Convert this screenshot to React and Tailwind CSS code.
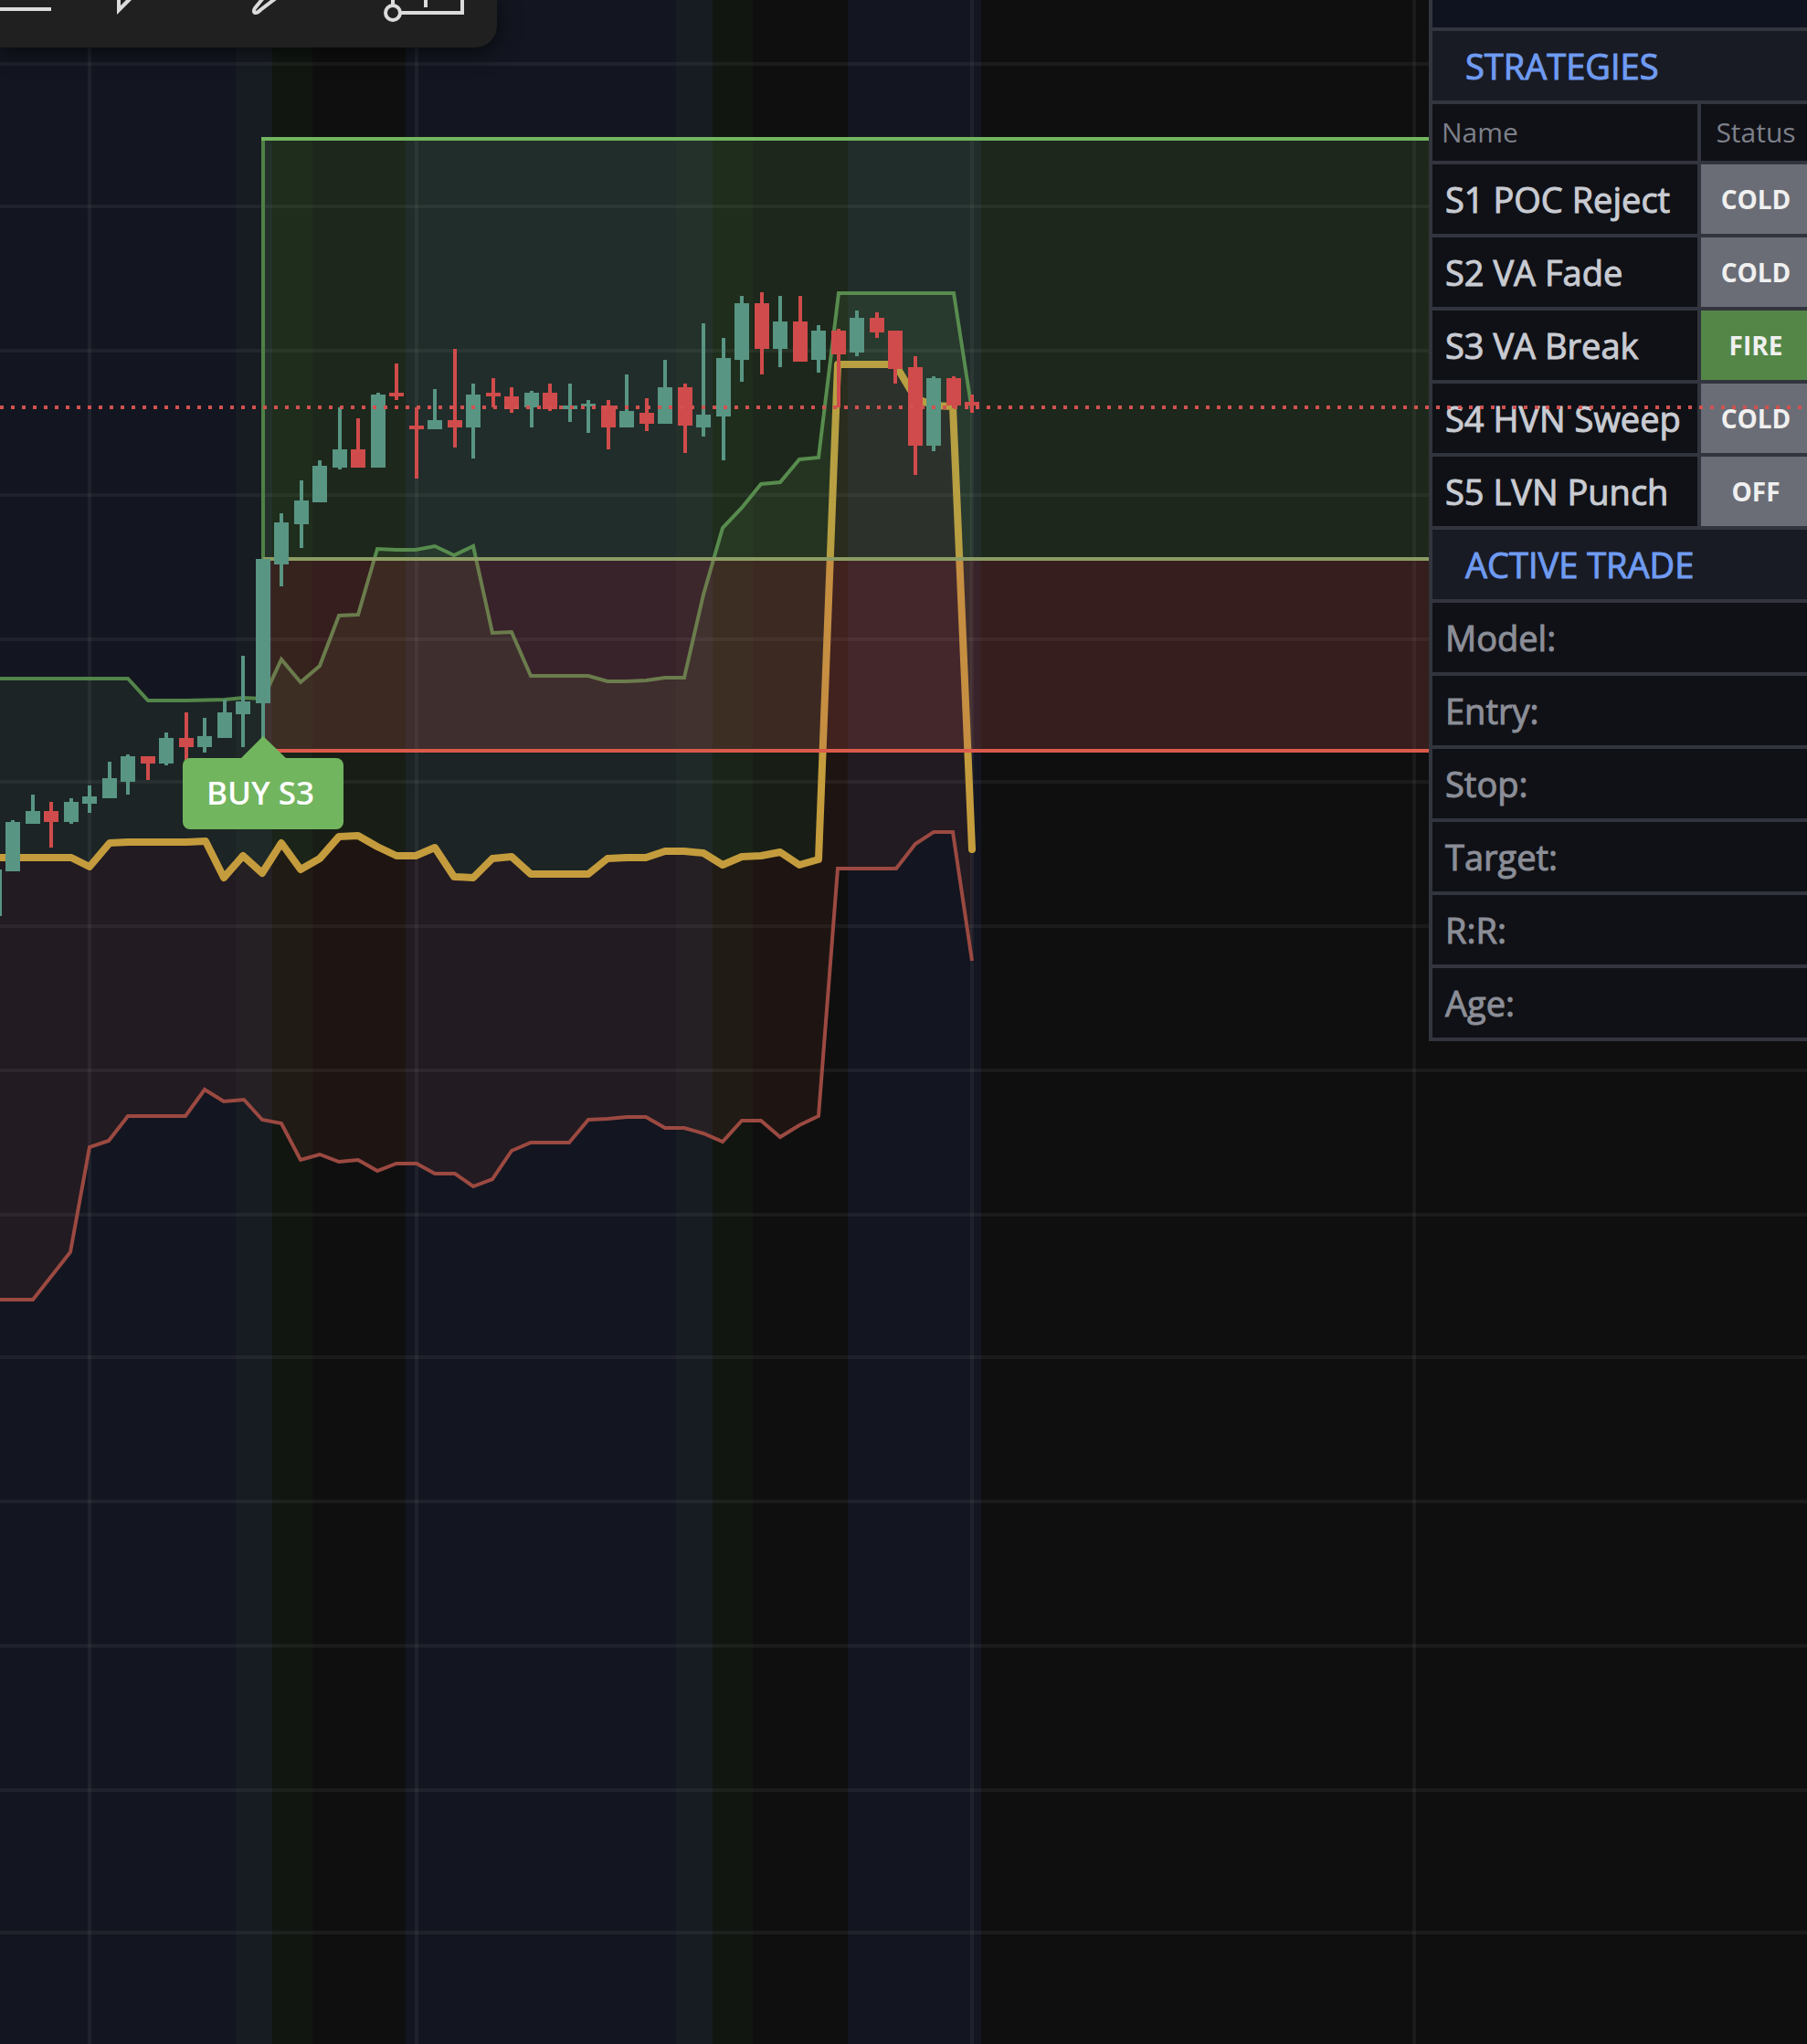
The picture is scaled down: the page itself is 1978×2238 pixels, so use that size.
const UP = "#589583";
const DOWN = "#d04b4b";

// [center x, high, body top, body bottom, low, direction]
const candles = [
  [-6, 952, 952, 1003, 1003, 1],
  [14, 898, 900, 954, 954, 1],
  [36, 870, 888, 902, 902, 1],
  [56, 878, 888, 900, 928, 0],
  [78, 874, 878, 900, 902, 1],
  [98, 860, 872, 880, 890, 1],
  [120, 834, 852, 874, 874, 1],
  [140, 826, 828, 856, 870, 1],
  [162, 828, 828, 836, 854, 0],
  [182, 802, 808, 836, 838, 1],
  [204, 780, 808, 818, 832, 0],
  [224, 786, 806, 818, 824, 1],
  [246, 766, 780, 808, 808, 1],
  [266, 718, 768, 782, 818, 1],
  [288, 612, 612, 770, 812, 1],
  [308, 562, 572, 618, 642, 1],
  [330, 526, 548, 574, 600, 1],
  [350, 504, 510, 550, 550, 1],
  [372, 446, 492, 512, 514, 1],
  [392, 458, 492, 512, 512, 0],
  [414, 430, 432, 512, 512, 1],
  [434, 398, 430, 434, 438, 0],
  [456, 446, 466, 470, 524, 0],
  [476, 426, 460, 470, 470, 1],
  [498, 382, 460, 468, 490, 0],
  [518, 420, 432, 468, 502, 1],
  [540, 414, 430, 434, 446, 0],
  [560, 424, 434, 448, 452, 0],
  [582, 428, 430, 446, 468, 1],
  [602, 420, 430, 448, 450, 0],
  [624, 420, 444, 448, 462, 1],
  [644, 438, 442, 445, 474, 1],
  [666, 438, 444, 468, 492, 0],
  [686, 410, 450, 468, 468, 1],
  [708, 436, 452, 464, 472, 0],
  [728, 394, 424, 464, 464, 1],
  [750, 420, 424, 466, 496, 0],
  [770, 354, 454, 468, 478, 1],
  [792, 370, 392, 456, 504, 1],
  [812, 324, 332, 394, 418, 1],
  [834, 320, 332, 382, 410, 0],
  [854, 324, 352, 382, 402, 1],
  [876, 324, 352, 396, 396, 0],
  [896, 356, 362, 394, 408, 1],
  [918, 360, 362, 388, 446, 0],
  [938, 340, 348, 386, 390, 1],
  [960, 342, 348, 364, 370, 0],
  [980, 362, 362, 404, 420, 0],
  [1002, 390, 402, 488, 520, 0],
  [1022, 412, 414, 488, 494, 1],
  [1044, 412, 414, 444, 447, 0],
  [1064, 432, 440, 444, 452, 0],
];

const upper = [
  [-4, 743], [140, 743], [162, 767], [204, 767], [246, 766], [266, 764], [288, 765],
  [308, 722], [329, 747], [350, 729], [371, 674], [392, 673], [413, 601], [434, 602],
  [455, 602], [476, 598], [497, 608], [518, 598], [539, 693], [560, 692], [581, 740],
  [644, 740], [665, 746], [686, 746], [707, 745], [728, 742], [749, 742], [770, 651],
  [791, 578], [812, 556], [833, 530], [854, 528], [875, 503], [896, 501], [918, 321],
  [1044, 321], [1064, 450],
];

const middle = [
  [-4, 939], [78, 939], [98, 949], [120, 923], [140, 922], [204, 922], [225, 921],
  [245, 961], [266, 937], [287, 956], [308, 923], [329, 952], [350, 940], [371, 916],
  [392, 915], [413, 927], [434, 937], [455, 937], [476, 928], [497, 960], [518, 961],
  [539, 940], [560, 938], [581, 957], [644, 957], [665, 940], [686, 939], [707, 939],
  [728, 932], [749, 932], [770, 934], [791, 947], [812, 938], [833, 937], [854, 933],
  [875, 947], [896, 941], [917, 399], [980, 399], [1002, 436], [1022, 444], [1043, 445],
  [1064, 930],
];

const lower = [
  [-4, 1423], [36, 1423], [77, 1371], [98, 1256], [119, 1249], [140, 1222], [203, 1222],
  [224, 1193], [245, 1206], [267, 1204], [287, 1226], [308, 1230], [329, 1270], [350, 1264],
  [371, 1272], [392, 1270], [413, 1282], [434, 1274], [456, 1274], [476, 1285], [498, 1285],
  [518, 1299], [539, 1291], [560, 1260], [581, 1251], [623, 1251], [644, 1226], [665, 1225],
  [686, 1223], [707, 1223], [728, 1235], [749, 1235], [770, 1241], [791, 1250], [812, 1227],
  [833, 1227], [854, 1245], [875, 1232], [896, 1222], [917, 951], [981, 951], [1002, 924],
  [1022, 911], [1043, 911], [1064, 1052],
];

const join = (pts) => pts.map((p) => p.join(",")).join(" ");
const between = (a, b) => join([...a, ...[...b].reverse()]);

const gridY = [70, 226, 384, 542, 700, 856, 1014, 1172, 1330, 1486, 1644, 1802, 1960, 2116];
const gridX = [98, 456, 1064, 1548];

// Session bands: [start x, end x, colour]
const bands = [
  [0, 258, "#131620"],
  [258, 298, "#171b22"],
  [298, 342, "#111611"],
  [444, 740, "#131620"],
  [740, 780, "#171b22"],
  [780, 824, "#111611"],
  [928, 1074, "#131620"],
];

function Chart() {
  return (
    <svg
      viewBox="0 0 1978 2238"
      className="col-start-1 row-start-1 block h-auto w-full"
      role="img"
      aria-label="Price chart"
    >
      <rect width="1978" height="2238" fill="#0f0f0f" />
      {bands.map(([a, b, fill]) => (
        <rect key={a} x={a} width={b - a} height="2238" fill={fill} />
      ))}

      <polygon points={between(upper, middle)} fill="rgba(109,162,92,0.1)" />
      <polygon points={between(middle, lower)} fill="rgba(169,82,52,0.1)" />

      {gridY.map((y) => (
        <rect key={y} y={y - 2} width="1978" height="4" fill="rgba(255,255,255,0.05)" />
      ))}
      {gridX.map((x) => (
        <rect key={x} x={x - 2} width="4" height="2238" fill="rgba(255,255,255,0.05)" />
      ))}

      <polyline points={join(upper)} fill="none" stroke="#53854a" strokeWidth="4" />
      <polyline points={join(lower)} fill="none" stroke="#9b4941" strokeWidth="4" />
      <polyline
        points={join(middle)}
        fill="none"
        stroke="#c49c3d"
        strokeWidth="8"
        strokeLinejoin="round"
        strokeLinecap="round"
      />

      <rect x="288" y="152" width="1690" height="460" fill="rgba(114,181,98,0.15)" />
      <rect x="288" y="612" width="1690" height="210" fill="rgba(205,90,85,0.2)" />
      <path d="M288 152V612" stroke="#4f8044" strokeWidth="4" />
      <path d="M286 152H1978" stroke="#72b55f" strokeWidth="4" />
      <path d="M288 612H1978" stroke="#8c9c63" strokeWidth="4" />
      <path d="M288 822H1978" stroke="#db5b4b" strokeWidth="4" />

      {candles.map(([x, high, top, bottom, low, up]) => (
        <g key={x} fill={up ? UP : DOWN}>
          <rect x={x - 2} y={high} width="4" height={low - high} />
          <rect x={x - 8} y={top} width="16" height={bottom - top} />
        </g>
      ))}

      <path d="M262 832L288 806L315 832Z" fill="#72b55f" />
      <rect x="200" y="830" width="176" height="78" rx="8" fill="#72b55f" />
      <text
        x="285"
        y="881"
        textAnchor="middle"
        fill="#fff"
        className="font-['Open_Sans',sans-serif] text-[35px] font-semibold"
      >
        BUY S3
      </text>
    </svg>
  );
}

function PriceLine() {
  return (
    <svg
      viewBox="0 0 1978 2238"
      className="pointer-events-none z-10 col-start-1 row-start-1 block h-auto w-full"
      aria-hidden="true"
    >
      <path d="M0 446H1978" stroke="#d15250" strokeWidth="4" strokeDasharray="4 8" />
    </svg>
  );
}

function ToolButton({ label, className, children }) {
  return (
    <button type="button" aria-label={label} className={className}>
      <svg
        viewBox="0 0 148 52"
        className="block h-[52px] w-[148px]"
        fill="none"
        stroke="#dbdbdb"
        strokeWidth="4"
        aria-hidden="true"
      >
        {children}
      </svg>
    </button>
  );
}

function Toolbar() {
  return (
    <div
      role="toolbar"
      aria-label="Drawing tools"
      className="z-20 col-start-1 row-start-1 flex items-start self-start justify-self-start overflow-hidden rounded-br-3xl bg-[#202020] shadow-[0_4px_24px_rgba(0,0,0,0.6)]"
    >
      <ToolButton label="Horizontal line" className="w-[100px] overflow-hidden">
        <path d="M0 10H56" />
      </ToolButton>
      <ToolButton label="Cursor">
        <path d="M28 0V16L44 0H38L32 6V0Z" fill="#dbdbdb" stroke="none" />
      </ToolButton>
      <ToolButton label="Pencil">
        <path d="M40 -2L31 9C29 12 30 14 32 14C34 14 35 13 37 11L54 -2" />
      </ToolButton>
      <ToolButton label="Range">
        <path d="M34 0V6M42 14H110V0M70 0V8" />
        <circle cx="34" cy="14" r="8" />
      </ToolButton>
    </div>
  );
}

const strategies = [
  ["S1 POC Reject", "COLD"],
  ["S2 VA Fade", "COLD"],
  ["S3 VA Break", "FIRE"],
  ["S4 HVN Sweep", "COLD"],
  ["S5 LVN Punch", "OFF"],
];
const fields = ["Model:", "Entry:", "Stop:", "Target:", "R:R:", "Age:"];

function SectionTitle({ children }) {
  return (
    <h2 className="flex h-20 items-center border-b-4 border-[#32353d] bg-[#191b24] pl-9 text-[38px] leading-none text-[#6f9bf2] [-webkit-text-stroke:1px_#6f9bf2]">
      {children}
    </h2>
  );
}

function Panel() {
  return (
    <aside className="col-start-1 row-start-1 w-[414px] self-start justify-self-end overflow-hidden border-l-4 border-[#32353d] bg-[#101116]">
      <div className="h-[34px] border-b-4 border-[#32353d] bg-[#0f1320]" />
      <SectionTitle>STRATEGIES</SectionTitle>
      <table className="w-[414px] table-fixed border-separate border-spacing-0">
        <thead>
          <tr className="h-[66px] text-[30px] leading-none text-[#7d808a]">
            <th scope="col" className="border-b-4 border-[#32353d] p-0 pl-2.5 text-left font-normal">
              Name
            </th>
            <th scope="col" className="w-[124px] border-b-4 border-l-4 border-[#32353d] p-0 font-normal">
              Status
            </th>
          </tr>
        </thead>
        <tbody>
          {strategies.map(([name, status]) => (
            <tr key={name} className="h-20 whitespace-nowrap leading-none">
              <td className="border-b-4 border-[#32353d] p-0 pl-3.5 text-[38px] text-[#c8cbd2] [-webkit-text-stroke:1px_#c8cbd2]">
                {name}
              </td>
              <td
                className={
                  "border-b-4 border-l-4 border-[#32353d] p-0 text-center text-[28px] font-bold text-[#f0f0f0] " +
                  (status === "FIRE" ? "bg-[#548648]" : "bg-[#6a6d76]")
                }
              >
                {status}
              </td>
            </tr>
          ))}
        </tbody>
      </table>
      <SectionTitle>ACTIVE TRADE</SectionTitle>
      <table className="w-full border-separate border-spacing-0">
        <tbody>
          {fields.map((f) => (
            <tr key={f} className="h-20 leading-none">
              <th
                scope="row"
                className="border-b-4 border-[#32353d] p-0 pl-3.5 text-left text-[38px] font-normal text-[#8b8e97] [-webkit-text-stroke:1px_#8b8e97]"
              >
                {f}
              </th>
              <td className="border-b-4 border-[#32353d] p-0" />
            </tr>
          ))}
        </tbody>
      </table>
    </aside>
  );
}

export default function App() {
  return (
    <main className="grid min-h-screen grid-cols-1 items-start overflow-hidden bg-[#0f0f0f] font-['Open_Sans',sans-serif]">
      <Chart />
      <Panel />
      <PriceLine />
      <Toolbar />
    </main>
  );
}
